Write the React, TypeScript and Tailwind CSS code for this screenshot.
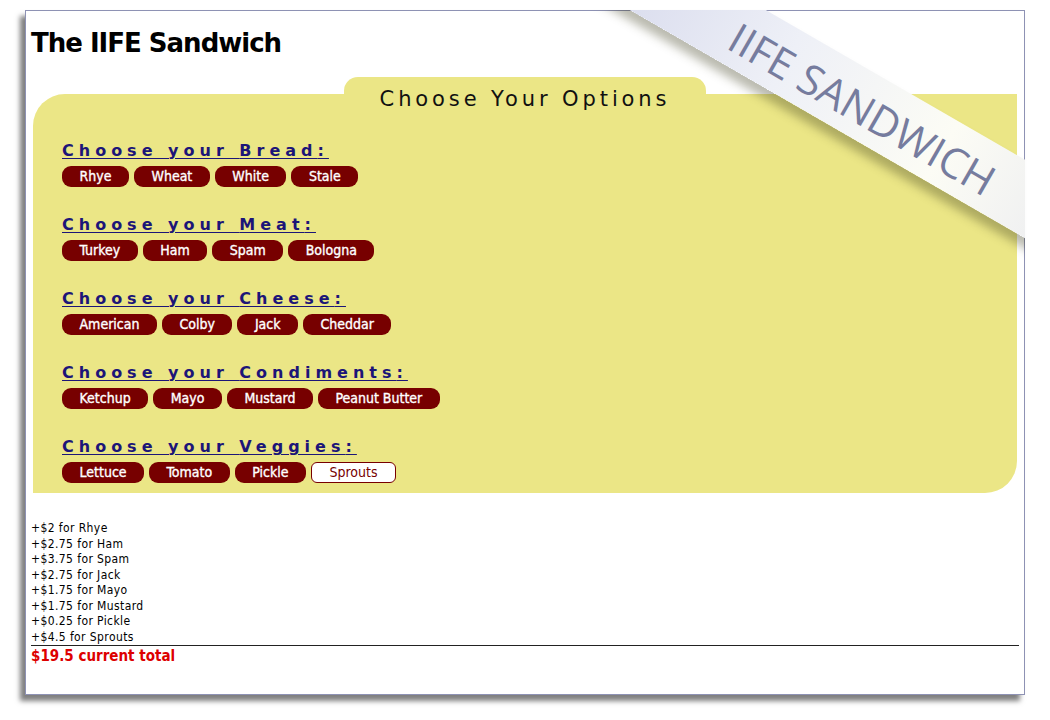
import { useState } from 'react'

const SECTIONS = [
  { name: 'Bread', items: ['Rhye', 'Wheat', 'White', 'Stale'] },
  { name: 'Meat', items: ['Turkey', 'Ham', 'Spam', 'Bologna'] },
  { name: 'Cheese', items: ['American', 'Colby', 'Jack', 'Cheddar'] },
  { name: 'Condiments', items: ['Ketchup', 'Mayo', 'Mustard', 'Peanut Butter'] },
  { name: 'Veggies', items: ['Lettuce', 'Tomato', 'Pickle', 'Sprouts'] },
]

const PRICES = [
  ['2', 'Rhye'],
  ['2.75', 'Ham'],
  ['3.75', 'Spam'],
  ['2.75', 'Jack'],
  ['1.75', 'Mayo'],
  ['1.75', 'Mustard'],
  ['0.25', 'Pickle'],
  ['4.5', 'Sprouts'],
]

const condensed = "font-['DejaVu_Sans_Condensed','DejaVu_Sans',sans-serif]"

export default function App() {
  const [hover] = useState('Sprouts')
  const total = PRICES.reduce((sum, [p]) => sum + Number(p), 0)

  return (
    <div className="h-[720px] bg-white pt-[10px] pl-[25px]">
      <div className="relative w-[1000px] h-[685px] border border-[#8e92b4] bg-white shadow-[-5px_6px_5px_rgba(0,0,0,0.5)]">
        {/* corner ribbon, clipped to the page box (covers the border too) */}
        <div className="absolute -inset-px overflow-hidden pointer-events-none z-10">
          <div className="absolute left-[539px] top-[62px] w-[600px] h-[68px] rotate-[30deg] bg-[linear-gradient(to_right,#d6d9ec,#eef0f7_35%,#fcfcf5_65%,#e6e7ee)] shadow-[0_9px_10px_rgba(60,60,30,0.35)] flex items-center justify-center">
            <span className="font-['Open_Sans',sans-serif] text-[42px] leading-[42px] text-[#767c9e] mt-[6px]">
              IIFE SANDWICH
            </span>
          </div>
        </div>

        <div className="px-[5px] pt-[16px]">
          <h1 className="font-['DejaVu_Sans',sans-serif] font-bold text-[26px] leading-[32px] tracking-[-1px] text-black">
            The IIFE Sandwich
          </h1>

          <div className="mt-[18px] mx-[2px]">
            <div className="ml-[311px] w-[362px] h-[17px] rounded-t-[14px] bg-[#ebe686]" />
            <div className="flow-root bg-[#ebe686] rounded-tl-[32px] rounded-br-[32px] pl-[29px] pb-[10px]">
              <p className="-mt-[7px] -ml-[29px] text-center font-['DejaVu_Sans',sans-serif] text-[21px] leading-[24px] tracking-[3.9px] text-[#111]">
                Choose Your Options
              </p>
              <div className="mt-[31px] flex flex-col gap-[29px]">
                {SECTIONS.map((s) => (
                  <div key={s.name}>
                    <h2 className="font-['DejaVu_Sans',sans-serif] font-bold text-[16px] leading-[18px] tracking-[5px] text-[#1c1578] underline underline-offset-[2px] decoration-1">
                      Choose your {s.name}:
                    </h2>
                    <div className="mt-[6px] flex gap-[5px]">
                      {s.items.map((item) => (
                        <button
                          key={item}
                          className={
                            item === hover
                              ? `${condensed} h-[21px] px-[17.5px] rounded-[6px] border border-[#770000] bg-white text-[#770000] text-[14px] leading-[19px]`
                              : `${condensed} h-[21px] px-[17.5px] rounded-[9px] bg-[#770000] text-white text-[14px] leading-[21px] [-webkit-text-stroke:0.35px_white]`
                          }
                        >
                          {item}
                        </button>
                      ))}
                    </div>
                  </div>
                ))}
              </div>
            </div>
          </div>

          <div className={`${condensed} mt-[28px] text-[12px] leading-[15.5px] tracking-[0.4px] text-black`}>
            {PRICES.map(([p, n]) => (
              <div key={n}>+${p} for {n}</div>
            ))}
          </div>
          <div className="border-t border-[#222]" />
          <div className={`${condensed} mt-[1px] font-bold text-[15px] leading-[18px] text-[#dd0000]`}>
            ${total} current total
          </div>
        </div>
      </div>
    </div>
  )
}
